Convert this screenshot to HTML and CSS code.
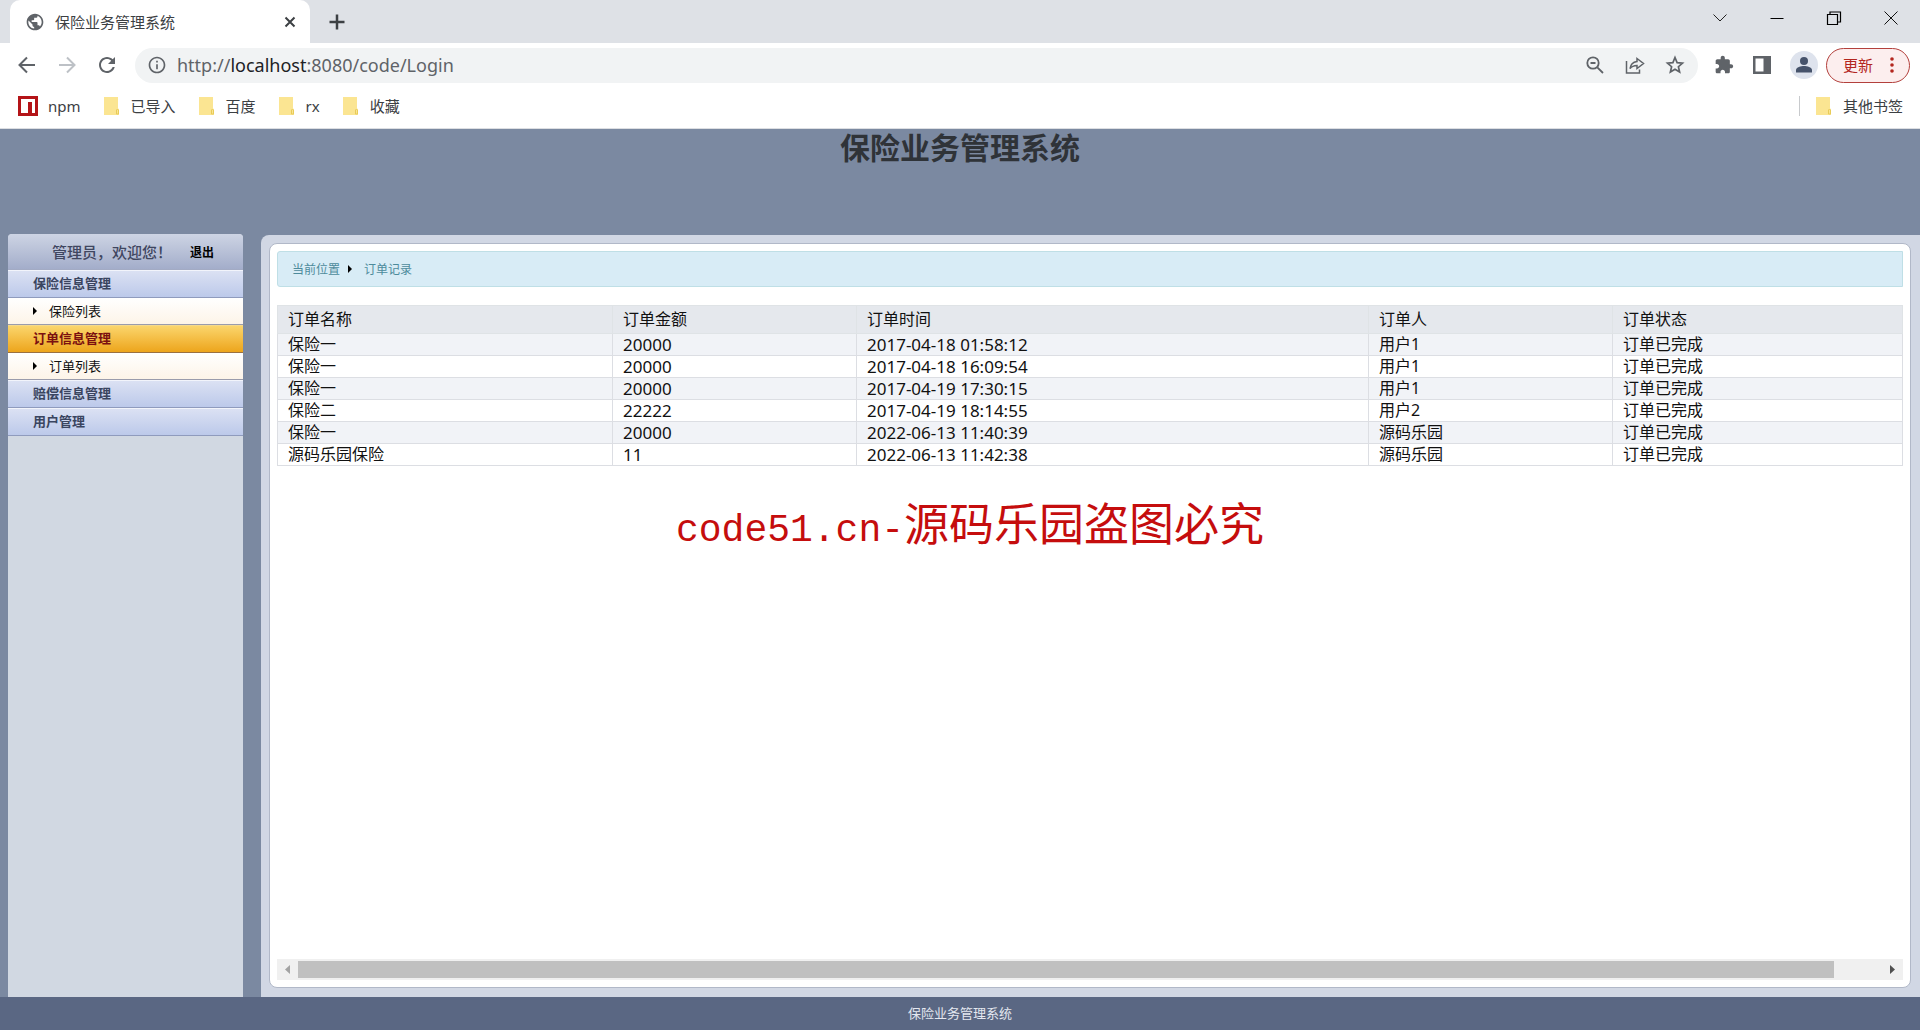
FILE: index.html
```html
<!DOCTYPE html>
<html lang="zh-CN">
<head>
<meta charset="utf-8">
<title>保险业务管理系统</title>
<link rel="stylesheet" href="styles.css">
</head>
<body>
<header class="browser">
  <div class="tabstrip">
    <div class="tab">
      <svg class="icon20" viewBox="0 0 24 24" fill="#5f6368"><path d="M12 2C6.480 2 2 6.480 2 12s4.480 10 10 10 10-4.480 10-10S17.520 2 12 2zm-1 17.930c-3.950-.49-7-3.850-7-7.930 0-.62.08-1.210.21-1.790L9 15v1c0 1.100.9 2 2 2v1.930zm6.900-2.540c-.26-.81-1-1.390-1.900-1.390h-1v-3c0-.55-.45-1-1-1H8v-2h2c.55 0 1-.45 1-1V7h2c1.100 0 2-.9 2-2v-.41c2.930 1.190 5 4.060 5 7.410 0 2.080-.8 3.970-2.100 5.390z"/></svg>
      <span class="tab-title">保险业务管理系统</span>
      <button class="plain" aria-label="关闭标签页"><svg class="icon20" viewBox="0 0 20 20" stroke="#3c4043" stroke-width="2" fill="none"><path d="M5.500 5.500l9 9M14.500 5.500l-9 9"/></svg></button>
    </div>
    <button class="plain new-tab" aria-label="新标签页"><svg class="icon20" viewBox="0 0 20 20" stroke="#3c4043" stroke-width="2.500" fill="none"><path d="M10 2.500v15M2.500 10h15"/></svg></button>
    <div class="window-controls">
      <button class="plain" aria-label="搜索标签页"><svg class="icon20" viewBox="0 0 20 20" stroke="#222" fill="none"><path d="M3.500 6.500L10 13l6.500-6.500"/></svg></button>
      <button class="plain" aria-label="最小化"><svg class="icon20" viewBox="0 0 20 20" stroke="#000" fill="none"><path d="M3.500 10.500h13"/></svg></button>
      <button class="plain" aria-label="还原"><svg class="icon20" viewBox="0 0 20 20" stroke="#000" stroke-width="1.200" fill="none"><path d="M3.500 6.500h10v10h-10zM6 6.500v-2.500h10.500v10H14"/></svg></button>
      <button class="plain" aria-label="关闭"><svg class="icon20" viewBox="0 0 20 20" stroke="#111" fill="none"><path d="M3.500 3.500l13 13M16.500 3.500l-13 13"/></svg></button>
    </div>
  </div>
  <div class="toolbar">
    <button class="plain" aria-label="后退"><svg class="icon24" viewBox="0 0 24 24" stroke="#5f6368" stroke-width="2" fill="none"><path d="M20 12H5M12 4.500L4.500 12l7.500 7.500"/></svg></button>
    <button class="plain" aria-label="前进"><svg class="icon24" viewBox="0 0 24 24" stroke="#bdc1c6" stroke-width="2" fill="none"><path d="M4 12h15M12 4.500l7.500 7.500-7.500 7.500"/></svg></button>
    <button class="plain" aria-label="重新加载"><svg class="icon24" viewBox="0 0 24 24" fill="#5f6368"><path d="M17.650 6.350C16.200 4.900 14.210 4 12 4c-4.420 0-7.990 3.580-7.990 8s3.570 8 7.990 8c3.730 0 6.840-2.550 7.730-6h-2.080c-.82 2.330-3.040 4-5.650 4-3.310 0-6-2.690-6-6s2.690-6 6-6c1.660 0 3.140.69 4.220 1.780L13 11h7V4l-2.350 2.350z"/></svg></button>
    <div class="omnibox">
      <svg class="icon20" viewBox="0 0 24 24" fill="#5f6368"><path d="M11 7h2v2h-2zm0 4h2v6h-2zm1-9C6.480 2 2 6.480 2 12s4.480 10 10 10 10-4.480 10-10S17.520 2 12 2zm0 18c-4.410 0-8-3.590-8-8s3.590-8 8-8 8 3.590 8 8-3.590 8-8 8z"/></svg>
      <span class="url">http://<span class="host">localhost</span>:8080/code/Login</span>
      <button class="plain" aria-label="缩放"><svg class="icon20" viewBox="0 0 20 20" stroke="#5f6368" stroke-width="1.800" fill="none"><circle cx="8" cy="8" r="5.700"/><path d="M12.300 12.300l5.700 5.700M5.500 8h5"/></svg></button>
      <button class="plain" aria-label="分享"><svg class="icon20" viewBox="0 0 20 20" stroke="#5f6368" stroke-width="1.500" fill="none"><path d="M1.500 6v12h13v-3.500M12 3.500l6.500 5-6.500 5v-3c-3.500 0-5.500 1-7 3.200.5-4.200 3-6.700 7-7.200z"/></svg></button>
      <button class="plain" aria-label="添加书签"><svg class="icon20" viewBox="0 0 20 20" stroke="#5f6368" stroke-width="1.700" fill="none"><path d="M10 2.500l2.100 5.100 5.400.5-4.100 3.600 1.200 5.300-4.600-2.800L5.400 17l1.200-5.300-4.100-3.600 5.400-.5z"/></svg></button>
    </div>
    <div class="actions">
      <button class="plain" aria-label="扩展程序"><svg class="icon20" viewBox="0 0 24 24" fill="#5f6368"><path d="M20.500 11H19V7c0-1.100-.9-2-2-2h-4V3.500C13 2.120 11.880 1 10.500 1S8 2.120 8 3.500V5H4c-1.100 0-1.990.9-1.990 2v3.800H3.500c1.490 0 2.700 1.210 2.700 2.700s-1.210 2.700-2.700 2.700H2V20c0 1.100.9 2 2 2h3.800v-1.500c0-1.490 1.210-2.700 2.700-2.700s2.700 1.210 2.700 2.700V22H17c1.100 0 2-.9 2-2v-4h1.500c1.380 0 2.500-1.120 2.500-2.500S21.880 11 20.500 11z"/></svg></button>
      <button class="plain" aria-label="侧边栏"><svg class="icon20" viewBox="0 0 20 20"><path fill="#5f6368" fill-rule="evenodd" d="M1 1h18v18H1zM3.500 3.500v13h8v-13z"/></svg></button>
      <button class="plain" aria-label="用户"><svg class="icon28" viewBox="0 0 28 28"><circle cx="14" cy="14" r="14" fill="#dee3ed"/><g fill="#46536b"><circle cx="14" cy="10" r="4"/><path d="M6 21.500v-2.500c0-2.700 5-4 8-4s8 1.300 8 4v2.500z"/></g></svg></button>
    </div>
    <button class="update">更新<svg class="dots" viewBox="0 0 4 18" fill="#b3261e"><circle cx="2" cy="3" r="1.800"/><circle cx="2" cy="9" r="1.800"/><circle cx="2" cy="15" r="1.800"/></svg></button>
  </div>
  <nav class="bookmarks" aria-label="书签">
    <a class="bookmark npm" href="#"><svg class="icon20" viewBox="0 0 20 20"><path fill="#b41418" d="M0 0h20v20H0z"/><path fill="#fff" d="M3 3h14v14h-3V6h-4v11H3z"/></svg>npm</a>
    <a class="bookmark" href="#"><svg class="folder" viewBox="0 0 16 18"><path fill="#fbe592" d="M1 0h14v11l1 2v5H1z"/><path fill="none" stroke="#e8cb58" d="M13.500 17v-4l1-1 1 1v4z"/></svg>已导入</a>
    <a class="bookmark" href="#"><svg class="folder" viewBox="0 0 16 18"><path fill="#fbe592" d="M1 0h14v11l1 2v5H1z"/><path fill="none" stroke="#e8cb58" d="M13.500 17v-4l1-1 1 1v4z"/></svg>百度</a>
    <a class="bookmark" href="#"><svg class="folder" viewBox="0 0 16 18"><path fill="#fbe592" d="M1 0h14v11l1 2v5H1z"/><path fill="none" stroke="#e8cb58" d="M13.500 17v-4l1-1 1 1v4z"/></svg>rx</a>
    <a class="bookmark" href="#"><svg class="folder" viewBox="0 0 16 18"><path fill="#fbe592" d="M1 0h14v11l1 2v5H1z"/><path fill="none" stroke="#e8cb58" d="M13.500 17v-4l1-1 1 1v4z"/></svg>收藏</a>
    <a class="bookmark others" href="#"><svg class="folder" viewBox="0 0 16 18"><path fill="#fbe592" d="M1 0h14v11l1 2v5H1z"/><path fill="none" stroke="#e8cb58" d="M13.500 17v-4l1-1 1 1v4z"/></svg>其他书签</a>
  </nav>
</header>

<div class="app">
  <h1 class="banner">保险业务管理系统</h1>
  <div class="workspace">
    <aside class="sidebar">
      <div class="welcome"><span>管理员，欢迎您！</span><a class="logout" href="#">退出</a></div>
      <nav class="menu">
        <a class="group" href="#">保险信息管理</a>
        <a class="item" href="#">保险列表</a>
        <a class="group active" href="#">订单信息管理</a>
        <a class="item" href="#">订单列表</a>
        <a class="group" href="#">赔偿信息管理</a>
        <a class="group" href="#">用户管理</a>
      </nav>
    </aside>
    <main class="frame">
      <div class="content">
        <div class="crumbs"><span>当前位置</span><span class="crumb">订单记录</span></div>
        <table class="orders">
          <colgroup><col class="c-name"><col class="c-amount"><col class="c-time"><col class="c-user"><col class="c-state"></colgroup>
          <thead><tr><th>订单名称</th><th>订单金额</th><th>订单时间</th><th>订单人</th><th>订单状态</th></tr></thead>
          <tbody>
            <tr><td>保险一</td><td class="num">20000</td><td class="num">2017-04-18 01:58:12</td><td>用户1</td><td>订单已完成</td></tr>
            <tr><td>保险一</td><td class="num">20000</td><td class="num">2017-04-18 16:09:54</td><td>用户1</td><td>订单已完成</td></tr>
            <tr><td>保险一</td><td class="num">20000</td><td class="num">2017-04-19 17:30:15</td><td>用户1</td><td>订单已完成</td></tr>
            <tr><td>保险二</td><td class="num">22222</td><td class="num">2017-04-19 18:14:55</td><td>用户2</td><td>订单已完成</td></tr>
            <tr><td>保险一</td><td class="num">20000</td><td class="num">2022-06-13 11:40:39</td><td>源码乐园</td><td>订单已完成</td></tr>
            <tr><td>源码乐园保险</td><td class="num">11</td><td class="num">2022-06-13 11:42:38</td><td>源码乐园</td><td>订单已完成</td></tr>
          </tbody>
        </table>
        <div class="scrollbar">
          <button class="plain arrow" aria-label="向左滚动"><svg viewBox="0 0 21 21" fill="#a3a3a3"><path d="M13 6v9l-5-4.500z"/></svg></button>
          <div class="track"><div class="thumb"></div></div>
          <button class="plain arrow" aria-label="向右滚动"><svg viewBox="0 0 21 21" fill="#505050"><path d="M8 6v9l5-4.500z"/></svg></button>
        </div>
      </div>
    </main>
  </div>
  <footer class="footer">保险业务管理系统</footer>
  <div class="watermark"><span class="watermark-site">code51.cn-</span>源码乐园盗图必究</div>
</div>
</body>
</html>
```
FILE: styles.css
```css
* { box-sizing: border-box; }
body {
  margin: 0;
  min-height: 100vh;
  display: flex;
  flex-direction: column;
  font-family: "Noto Sans", "Noto Sans CJK SC", sans-serif;
  font-size: 16px;
  color: #111;
}
a { color: inherit; text-decoration: none; }
svg { display: block; flex: none; }
.plain { display: block; flex: none; padding: 0; border: 0; background: none; }
.icon20 { width: 20px; height: 20px; }
.icon24 { width: 24px; height: 24px; }
.icon28 { width: 28px; height: 28px; }

/* browser chrome */
.browser { background: #fff; border-bottom: 1px solid #dcdee2; color: #3c4043; font-size: 15px; }
.tabstrip { display: flex; height: 43px; padding-left: 10px; background: #dee1e6; }
.tab {
  display: flex;
  align-items: center;
  width: 300px;
  padding: 0 10px 0 15px;
  background: #fff;
  border-radius: 10px 10px 0 0;
}
.tab-title { flex: 1; margin-left: 10px; }
.new-tab { align-self: center; margin-left: 17px; }
.window-controls { display: flex; align-items: flex-start; gap: 37px; margin-left: auto; padding: 8px 19px 0 0; }
.toolbar { display: flex; align-items: center; gap: 16px; height: 44px; padding: 0 10px 0 15px; }
.omnibox {
  display: flex;
  align-items: center;
  gap: 20px;
  flex: 1;
  height: 35px;
  padding: 0 13px 0 12px;
  background: #f1f3f4;
  border-radius: 18px;
}
.url { flex: 1; margin-left: -10px; font-size: 18px; line-height: 24px; color: #5f6368; }
.host { color: #202124; }
.actions { display: flex; align-items: center; gap: 18px; }
.update {
  display: flex;
  align-items: center;
  justify-content: space-between;
  width: 84px;
  height: 35px;
  margin-left: -8px;
  padding: 0 15px 0 16px;
  border: 1px solid #b3403c;
  border-radius: 18px;
  background: #fceeee;
  color: #b3261e;
  font: inherit;
  line-height: 20px;
}
.dots { width: 4px; height: 18px; }
.bookmarks { display: flex; align-items: center; gap: 22px; height: 41px; padding: 0 17px 4px 18px; }
.bookmark { display: flex; align-items: center; gap: 12px; line-height: 20px; }
.npm { gap: 10px; }
.folder { width: 16px; height: 18px; }
.others { margin-left: auto; padding-left: 15px; border-left: 1px solid #c8cacd; }

/* application */
.app { position: relative; flex: 1; display: flex; flex-direction: column; background: #7b89a1; }
.banner { margin: 0; height: 105px; font-size: 30px; line-height: 38px; text-align: center; color: #2f3338; }
.workspace { flex: 1; display: flex; gap: 18px; padding-left: 8px; }
.sidebar { width: 235px; background: #d1d8e2; border-radius: 4px 4px 0 0; overflow: hidden; }
.welcome {
  display: flex;
  align-items: center;
  gap: 18px;
  height: 36px;
  padding-left: 44px;
  border-bottom: 1px solid #a3abc4;
  background: linear-gradient(#cdd4e4, #a3adca);
  font-size: 15px;
  font-weight: 500;
  color: #3f4660;
}
.logout { font-size: 12px; font-weight: bold; color: #000; }
.menu { display: flex; flex-direction: column; font-size: 13px; }
.group {
  height: 28px;
  padding-left: 25px;
  border-top: 1px solid #f2f4fb;
  border-bottom: 1px solid #8f9bbd;
  background: linear-gradient(#dbe1f3, #bcc9ea);
  line-height: 24px;
  font-weight: bold;
  color: #3a4560;
}
.active { border-top-color: #f5d98c; border-bottom-color: #9a7040; background: linear-gradient(#fbd56c, #eda51c); color: #7b1010; }
.item {
  display: flex;
  align-items: center;
  gap: 12px;
  height: 27px;
  padding: 0 0 1px 25px;
  border-bottom: 1px solid #9a9cac;
  background: linear-gradient(#fff, #fdf4e8);
  line-height: 18px;
}
.item::before, .crumb::before { content: ""; border: 4px solid transparent; border-left-color: #000; border-right: 0; }
.frame {
  flex: 1;
  display: flex;
  min-width: 0;
  margin-top: 1px;
  padding: 8px 9px 9px 8px;
  border-top-left-radius: 8px;
  background: #d1d7e4;
}
.content {
  flex: 1;
  display: flex;
  flex-direction: column;
  min-width: 0;
  padding: 7px;
  border: 1px solid #b1b8c8;
  border-radius: 8px;
  background: #fff;
}
.crumbs {
  display: flex;
  align-items: center;
  gap: 8px;
  height: 36px;
  margin-bottom: 18px;
  padding-left: 14px;
  border: 1px solid #bfdfe6;
  border-radius: 3px 0 0 3px;
  background: #d8ecf6;
  font-size: 12px;
  color: #4d8b9c;
}
.crumb { display: flex; align-items: center; gap: 12px; }
.orders { width: 100%; border-collapse: collapse; table-layout: fixed; }
.c-name { width: 335px; }
.c-amount { width: 244px; }
.c-time { width: 512px; }
.c-user { width: 244px; }
.orders th, .orders td { height: 22px; padding: 0 0 0 10px; border: 1px solid #dcdee3; line-height: 21px; text-align: left; font-weight: normal; }
.orders th { height: 28px; background: #e5e8ed; border-color: #dfe3e6; }
.orders tbody tr:nth-child(odd) { background: #f1f3f7; }
.orders .num { font-size: 17px; }
.scrollbar { display: flex; height: 21px; margin-top: auto; background: #f0f0f0; }
.arrow { width: 21px; height: 21px; }
.track { flex: 1; padding: 2px 0; }
.thumb { width: 97%; height: 17px; background: #c0c0c0; }
.footer { height: 33px; background: #5a6783; font-size: 13px; line-height: 33px; text-align: center; color: #e4e8f0; }
.watermark {
  position: absolute;
  top: 362px;
  left: 0;
  right: 0;
  padding-left: 20px;
  font-size: 45px;
  line-height: 66px;
  text-align: center;
  white-space: nowrap;
  color: #c50d0d;
  pointer-events: none;
}
.watermark-site { font-family: "Liberation Mono", monospace; font-size: 38px; }
```
